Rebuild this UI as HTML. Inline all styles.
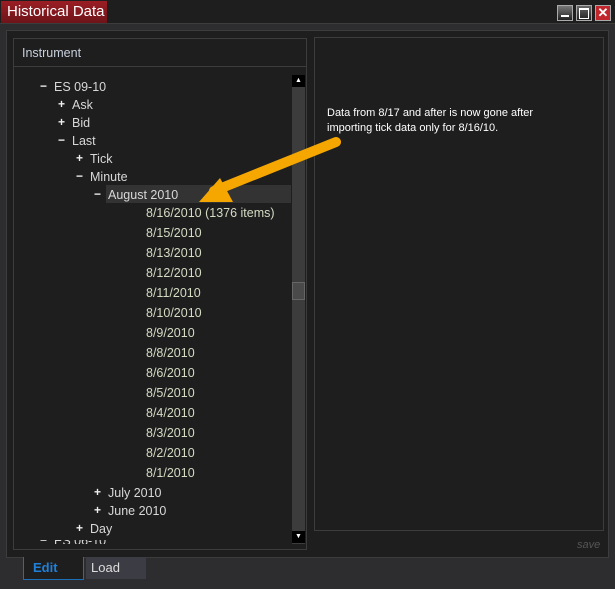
<!DOCTYPE html>
<html><head><style>
body{margin:0;width:615px;height:589px;background:#2d2d30;font-family:"Liberation Sans",sans-serif;position:relative;overflow:hidden}
.a{position:absolute}
.t{position:absolute;font-size:12.5px;color:#d8d8d8;white-space:nowrap;line-height:14px}
.d{color:#d4dcc4}
.pm{position:absolute;font-size:12px;color:#eee;font-weight:bold;line-height:14px}
</style></head><body>
<div class="a" style="left:0;top:0;width:615px;height:23px;background:#1e1e1e;border-bottom:1px solid #3c3c3c"></div>
<div class="a" style="left:1px;top:1px;width:106px;height:22px;background:linear-gradient(#9a1e24,#6e1419);color:#fff;font-size:15px;line-height:22px;padding-left:6px;box-sizing:border-box">Historical Data</div>
<div class="a" style="left:557px;top:5px;width:14px;height:14px;border:1px solid #aaa;background:linear-gradient(#777,#222)"><div class="a" style="left:3px;top:9px;width:8px;height:2px;background:#fff"></div></div>
<div class="a" style="left:576px;top:5px;width:14px;height:14px;border:1px solid #aaa;background:linear-gradient(#666,#222)"><div class="a" style="left:2px;top:2px;width:8px;height:8px;border:1px solid #fff;border-top-width:2px"></div></div>
<div class="a" style="left:595px;top:5px;width:14px;height:14px;border:1px solid #aaa;background:#c0262c;color:#fff;font-weight:bold;font-size:13px;line-height:14px;text-align:center">✕</div>
<div class="a" style="left:6px;top:30px;width:601px;height:526px;background:#1e1e1e;border:1px solid #3c3c3c"></div>
<div class="a" style="left:13px;top:38px;width:292px;height:510px;border:1px solid #3c3c3c;background:#1e1e1e"></div>
<div class="a" style="left:14px;top:66px;width:292px;height:1px;background:#3c3c3c"></div>
<div class="t" style="left:22px;top:46px;color:#c8d0dc">Instrument</div>
<div class="a" style="left:292px;top:75px;width:13px;height:469px;background:#3c3c3c"></div>
<div class="a" style="left:292px;top:75px;width:13px;height:12px;background:#000;color:#fff;font-size:7px;text-align:center;line-height:12px">▲</div>
<div class="a" style="left:292px;top:531px;width:13px;height:12px;background:#000;color:#fff;font-size:7px;text-align:center;line-height:12px">▼</div>
<div class="a" style="left:292px;top:282px;width:13px;height:18px;background:#4a4a4a;border:1px solid #666;box-sizing:border-box"></div>
<div class="a" style="left:106px;top:185px;width:185px;height:18px;background:#333"></div>
<div class="pm" style="left:40px;top:79px">−</div><div class="t" style="left:54px;top:80px">ES 09-10</div>
<div class="pm" style="left:58px;top:97px">+</div><div class="t" style="left:72px;top:98px">Ask</div>
<div class="pm" style="left:58px;top:115px">+</div><div class="t" style="left:72px;top:116px">Bid</div>
<div class="pm" style="left:58px;top:133px">−</div><div class="t" style="left:72px;top:134px">Last</div>
<div class="pm" style="left:76px;top:151px">+</div><div class="t" style="left:90px;top:152px">Tick</div>
<div class="pm" style="left:76px;top:169px">−</div><div class="t" style="left:90px;top:170px">Minute</div>
<div class="pm" style="left:94px;top:187px">−</div><div class="t" style="left:108px;top:188px">August 2010</div>
<div class="t d" style="left:146px;top:206px">8/16/2010 (1376 items)</div>
<div class="t d" style="left:146px;top:226px">8/15/2010</div>
<div class="t d" style="left:146px;top:246px">8/13/2010</div>
<div class="t d" style="left:146px;top:266px">8/12/2010</div>
<div class="t d" style="left:146px;top:286px">8/11/2010</div>
<div class="t d" style="left:146px;top:306px">8/10/2010</div>
<div class="t d" style="left:146px;top:326px">8/9/2010</div>
<div class="t d" style="left:146px;top:346px">8/8/2010</div>
<div class="t d" style="left:146px;top:366px">8/6/2010</div>
<div class="t d" style="left:146px;top:386px">8/5/2010</div>
<div class="t d" style="left:146px;top:406px">8/4/2010</div>
<div class="t d" style="left:146px;top:426px">8/3/2010</div>
<div class="t d" style="left:146px;top:446px">8/2/2010</div>
<div class="t d" style="left:146px;top:466px">8/1/2010</div>
<div class="pm" style="left:94px;top:485px">+</div><div class="t" style="left:108px;top:486px">July 2010</div>
<div class="pm" style="left:94px;top:503px">+</div><div class="t" style="left:108px;top:504px">June 2010</div>
<div class="pm" style="left:76px;top:521px">+</div><div class="t" style="left:90px;top:522px">Day</div>
<div class="a" style="left:14px;top:540px;width:277px;height:4px;overflow:hidden"><div class="pm" style="left:26px;top:-7px">−</div><div class="t" style="left:40px;top:-6px">ES 06-10</div></div>
<div class="a" style="left:314px;top:37px;width:288px;height:492px;border:1px solid #3c3c3c"></div>
<div class="t" style="left:327px;top:106px;color:#fff;font-size:11px;line-height:15px">Data from 8/17 and after is now gone after<br>importing tick data only for 8/16/10.</div>
<div class="t" style="left:577px;top:538px;color:#555;font-size:11px;font-style:italic">save</div>
<svg class="a" style="left:0;top:0" width="615" height="589"><line x1="336" y1="142" x2="214" y2="191" stroke="#f5a700" stroke-width="10" stroke-linecap="round"/><polygon points="199,202 220,178 233,202" fill="#f5a700"/></svg>
<div class="a" style="left:23px;top:557px;width:61px;height:23px;border:1px solid #1a6fb8;border-top:none;background:#1e1e1e;box-sizing:border-box;color:#1e80d8;font-size:13px;font-weight:bold;line-height:22px;padding-left:9px">Edit</div>
<div class="a" style="left:86px;top:557px;width:60px;height:22px;background:#3c3c44;color:#ddd;font-size:13px;line-height:22px;padding-left:5px;box-sizing:border-box">Load</div>
</body></html>
